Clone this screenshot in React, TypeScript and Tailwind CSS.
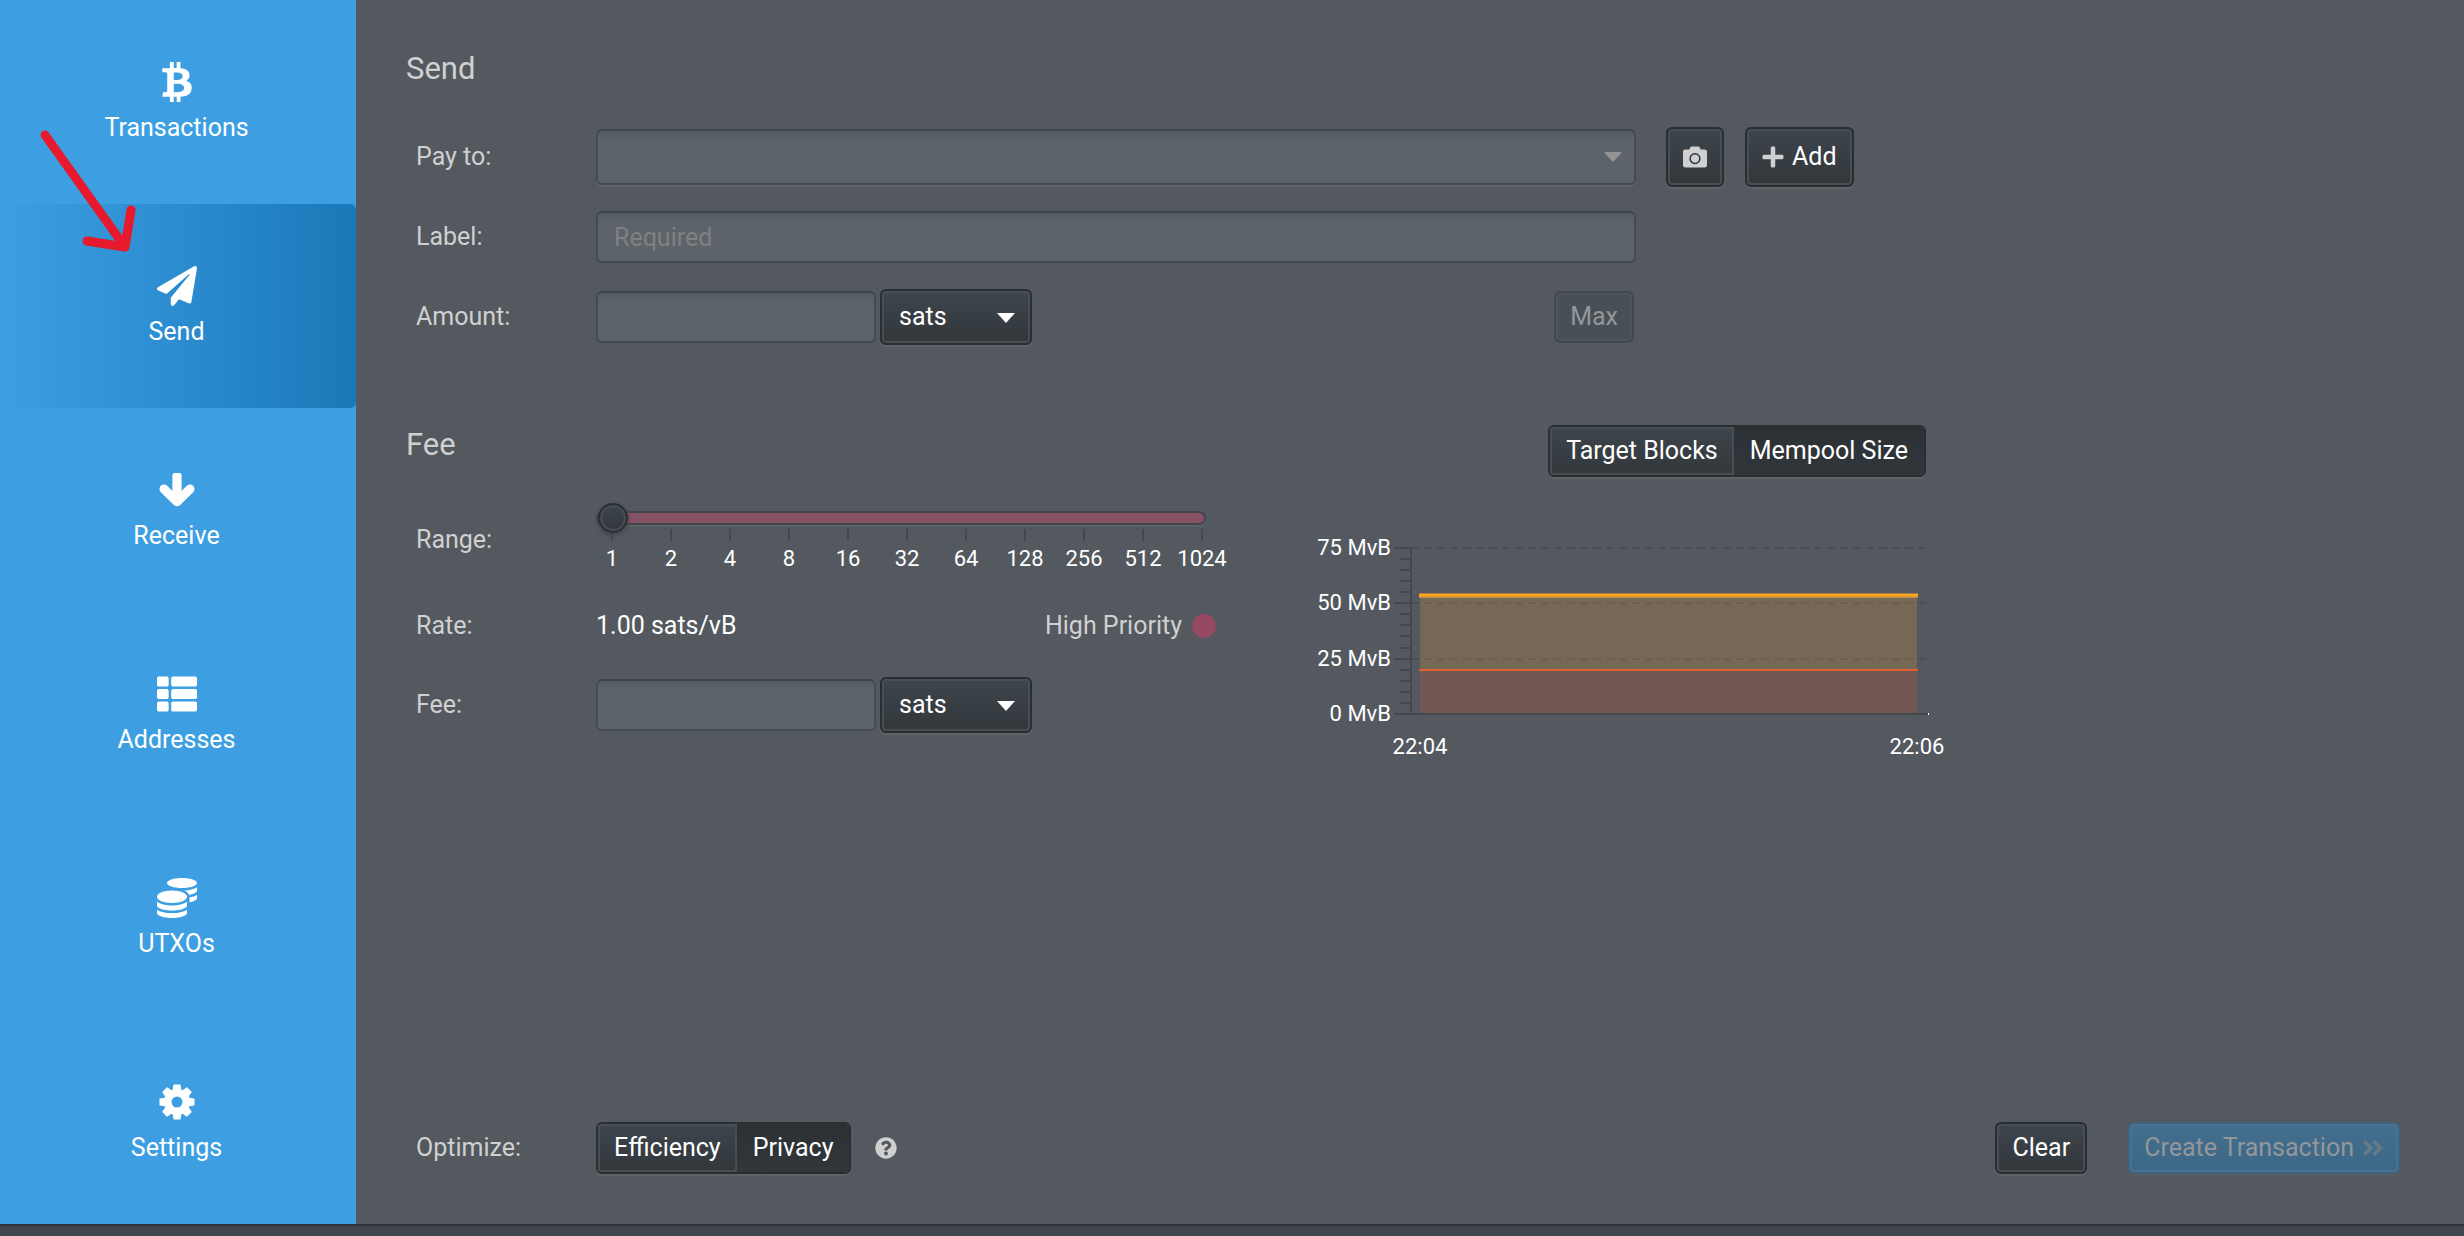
import { useState } from 'react';
import type { ReactNode } from 'react';
import {
  FaAngleDoubleRight,
  FaBtc,
  FaCamera,
  FaCoins,
  FaPaperPlane,
  FaPlus,
  FaQuestionCircle,
  FaThList,
} from 'react-icons/fa';

const RATES = [1, 2, 4, 8, 16, 32, 64, 128, 256, 512, 1024];

const FIELD =
  'w-full rounded-md border-2 border-[#454b52] border-t-[#3e444b] bg-[#5c636a] bg-linear-to-b from-[#535a61] from-0% to-[#5c636a] to-20% px-4 text-white placeholder:text-[#82807f] focus:outline-none';

const BUTTON =
  'flex items-center justify-center rounded-md border-2 border-[#292e31] bg-linear-to-b from-[#3e454d] to-[#31373a] text-white shadow-[inset_0_0_0_2px_#484f54,0_2px_0_#5d6367]';

function CogIcon() {
  return (
    <svg viewBox="-18 -18 36 36" className="h-9 w-9" fill="currentColor">
      <path
        fillRule="evenodd"
        d="M0-13A13 13 0 1 1 0 13A13 13 0 1 1 0-13ZM0-5.5A5.5 5.500 0 1 0 0 5.500A5.500 5.500 0 1 0 0-5.500Z"
      />
      {[0, 45, 90, 135, 180, 225, 270, 315].map((a) => (
        <path key={a} transform={`rotate(${a})`} d="M-4.6-11L-3.6-17Q-3.5-17.5-3-17.5H3Q3.5-17.5 3.6-17L4.6-11Z" />
      ))}
    </svg>
  );
}

function ArrowDownIcon() {
  return (
    <svg viewBox="0 0 36 34" className="h-[34px] w-9" fill="currentColor">
      <rect x="13.400" y="0" width="9.200" height="30" rx="2.500" />
      <path d="M5 16L18 28.800L31 16" fill="none" stroke="currentColor" strokeWidth="9" strokeLinecap="round" strokeLinejoin="round" />
    </svg>
  );
}

const NAV: { label: string; icon: ReactNode }[] = [
  { label: 'Transactions', icon: <FaBtc /> },
  { label: 'Send', icon: <FaPaperPlane /> },
  { label: 'Receive', icon: <ArrowDownIcon /> },
  { label: 'Addresses', icon: <FaThList /> },
  { label: 'UTXOs', icon: <FaCoins /> },
  { label: 'Settings', icon: <CogIcon /> },
];

function Sidebar() {
  const [active, setActive] = useState('Send');

  return (
    <nav className="flex w-[356px] shrink-0 flex-col bg-[#3d9fe2]">
      {NAV.map(({ label, icon }) => (
        <button
          key={label}
          onClick={() => setActive(label)}
          className={`flex flex-1 flex-col items-center justify-center gap-[10px] rounded-r-md pt-[2px] pr-[3px] text-white ${
            label === active ? 'bg-linear-to-r from-[#3d9fe2] via-[#2b8cd0] to-[#1b78b8]' : ''
          }`}
        >
          <span className="flex h-10 items-center text-[40px]">{icon}</span>
          <span className="leading-8">{label}</span>
        </button>
      ))}
    </nav>
  );
}

function UnitSelect({ label }: { label: string }) {
  return (
    <div className="relative w-[152px]">
      <select
        aria-label={label}
        className="h-14 w-full appearance-none rounded-md border-2 border-[#292e31] bg-linear-to-b from-[#3e454d] to-[#31373a] px-[17px] text-white shadow-[inset_0_0_0_2px_#484f54,0_2px_0_#5d6367]"
      >
        <option>sats</option>
        <option>BTC</option>
      </select>
      <svg viewBox="0 0 18 10" className="pointer-events-none absolute top-6 right-[17px] h-[10px] w-[18px]">
        <path d="M0 0H18L9 10Z" fill="#fff" />
      </svg>
    </div>
  );
}

interface SegmentedProps {
  options: string[];
  initial: string;
}

function Segmented({ options, initial }: SegmentedProps) {
  const [value, setValue] = useState(initial);

  return (
    <div className="flex h-[52px] rounded-md border-2 border-[#292e31] shadow-[0_2px_0_#5d6367]">
      {options.map((o) => (
        <button
          key={o}
          aria-pressed={o === value}
          onClick={() => setValue(o)}
          className={`px-4 text-white first:rounded-l-sm last:rounded-r-sm ${
            o === value
              ? 'bg-linear-to-b from-[#2c3135] to-[#303639]'
              : 'bg-linear-to-b from-[#3e454d] to-[#31373a] shadow-[inset_0_0_0_2px_#484f54]'
          }`}
        >
          {o}
        </button>
      ))}
    </div>
  );
}

function RateSlider() {
  const [step, setStep] = useState(0);

  return (
    <div className="w-[610px]">
      <input
        id="range"
        type="range"
        min={0}
        max={RATES.length - 1}
        value={step}
        onChange={(e) => setStep(Number(e.target.value))}
        className="relative block h-[22px] w-full appearance-none bg-transparent [&::-webkit-slider-runnable-track]:h-[14px] [&::-webkit-slider-runnable-track]:rounded-full [&::-webkit-slider-runnable-track]:border-2 [&::-webkit-slider-runnable-track]:border-[#42464d] [&::-webkit-slider-runnable-track]:bg-[#865264] [&::-webkit-slider-runnable-track]:shadow-[0_2px_0_#5d6367] [&::-webkit-slider-thumb]:-mt-[10px] [&::-webkit-slider-thumb]:h-[30px] [&::-webkit-slider-thumb]:w-[30px] [&::-webkit-slider-thumb]:appearance-none [&::-webkit-slider-thumb]:rounded-full [&::-webkit-slider-thumb]:border-2 [&::-webkit-slider-thumb]:border-[#292e31] [&::-webkit-slider-thumb]:bg-linear-to-b [&::-webkit-slider-thumb]:from-[#3e454d] [&::-webkit-slider-thumb]:to-[#31373a] [&::-webkit-slider-thumb]:shadow-[inset_0_0_0_2px_#484f54,0_2px_4px_#3c4247]"
      />
      <div className="flex justify-between pr-1 pl-4 text-[22px] leading-7 text-white">
        {RATES.map((r) => (
          <div key={r} className="flex w-0 flex-col items-center">
            <span className="mb-1 h-3 w-[2px] shrink-0 bg-[#42484e]" />
            {r}
          </div>
        ))}
      </div>
    </div>
  );
}

const MINOR_TICKS = [11, 22, 33, 44, 66, 77, 88, 100, 122, 133, 144, 155];
const MAJOR_TICKS = [
  { y: 0, label: '75 MvB' },
  { y: 55, label: '50 MvB' },
  { y: 111, label: '25 MvB' },
  { y: 166, label: '0 MvB' },
];

function MempoolChart() {
  return (
    <svg viewBox="0 0 640 240" className="h-[240px] w-[640px] text-[22px]" fill="#fff" role="img" aria-label="Mempool Size">
      <g transform="translate(0 18)">
        <g stroke="#484f55" strokeWidth="2" strokeDasharray="8 5">
          <path d="M101 0H619M101 55H619M101 111H619" />
        </g>
        <rect x="110" y="49" width="497" height="73" fill="#ffa726" fillOpacity="0.2" />
        <rect x="110" y="122" width="497" height="44" fill="#f4511e" fillOpacity="0.2" />
        <path d="M109 49H608" stroke="#b98e4c" strokeWidth="2" />
        <path d="M109 47H608" stroke="#faa41f" strokeWidth="3" />
        <path d="M109 122H608" stroke="#e0632f" strokeWidth="2" />
        <g stroke="#42484e" strokeWidth="2">
          <path d="M101 -1V166M84 166H618" />
          {MINOR_TICKS.map((y) => (
            <path key={y} d={`M90 ${y}H101`} />
          ))}
          {MAJOR_TICKS.map(({ y }) => (
            <path key={y} d={`M84 ${y}H101`} />
          ))}
        </g>
        <rect x="618" y="165" width="1" height="2" />
        {MAJOR_TICKS.map(({ y, label }) => (
          <text key={label} x="81" y={y + 7} textAnchor="end">
            {label}
          </text>
        ))}
        <text x="110" y="206" textAnchor="middle">
          22:04
        </text>
        <text x="607" y="206" textAnchor="middle">
          22:06
        </text>
      </g>
    </svg>
  );
}

function Row({ label, htmlFor, children }: { label: string; htmlFor?: string; children: ReactNode }) {
  return (
    <div className="flex items-center pl-[10px]">
      <label htmlFor={htmlFor} className="w-[180px] shrink-0">
        {label}
      </label>
      {children}
    </div>
  );
}

export default function App() {
  return (
    <div className="relative flex min-h-screen flex-col bg-[#53595f] font-[Roboto,'Liberation_Sans',sans-serif] text-[25px] leading-8 text-[#d0d0d0]">
      <div className="flex flex-1">
        <Sidebar />

        <main className="flex flex-1 flex-col pt-[49px] pr-16 pb-[50px] pl-[50px]">
          <h2 className="text-[31px] leading-10">Send</h2>
          <div className="mt-[38px] flex flex-col">
            <Row label="Pay to:" htmlFor="payto">
              <div className="flex h-[60px] flex-1 items-center">
                <div className="relative w-full max-w-[1040px]">
                  <input id="payto" className={`${FIELD} h-14 shadow-[0_2px_0_#5d6367]`} />
                  <button aria-label="Recent payees" className="absolute top-0 right-[14px] flex h-14 items-center">
                    <svg viewBox="0 0 18 10" className="h-[10px] w-[18px]">
                      <path d="M1 0H17Q18 .5 17 1.500L10 9Q9 10 8 9L1 1.500Q0 .5 1 0Z" fill="#949494" />
                    </svg>
                  </button>
                </div>
                <button aria-label="Scan QR" className={`${BUTTON} ml-[30px] h-[60px] w-[58px] shrink-0`}>
                  <FaCamera className="h-6 w-6 text-[#d0d0d0]" />
                </button>
                <button className={`${BUTTON} ml-[21px] h-[60px] shrink-0 gap-2 px-[15px]`}>
                  <FaPlus className="h-6 w-[22px] text-[#d0d0d0]" />
                  Add
                </button>
              </div>
            </Row>
            <div className="flex h-[100px] flex-col justify-center">
              <Row label="Label:" htmlFor="label">
                <div className="w-full max-w-[1040px]">
                  <input id="label" placeholder="Required" className={`${FIELD} h-[52px]`} />
                </div>
              </Row>
            </div>
            <Row label="Amount:" htmlFor="amount">
              <div className="flex h-[60px] w-full max-w-[1040px] items-center gap-1">
                <div className="w-[280px]">
                  <input id="amount" className={`${FIELD} h-[52px]`} />
                </div>
                <UnitSelect label="Amount unit" />
                <button
                  disabled
                  className="mr-[2px] ml-auto h-[52px] rounded-md border-2 border-[#42484e] bg-[#484f55] px-[14px] text-[#93979a] shadow-[inset_0_0_0_2px_#4e555b,0_2px_0_#575d63]"
                >
                  Max
                </button>
              </div>
            </Row>
          </div>

          <div className="mt-[78px] flex h-[54px] w-full max-w-[1520px] items-start justify-between">
            <h2 className="text-[31px] leading-10">Fee</h2>
            <Segmented options={['Target Blocks', 'Mempool Size']} initial="Mempool Size" />
          </div>
          <div className="flex items-start">
            <div className="mt-7 w-[820px] shrink-0">
              <Row label="Range:" htmlFor="range">
                <RateSlider />
              </Row>
              <div className="mt-[37px] pr-[10px]">
                <Row label="Rate:">
                  <output className="text-white">1.00 sats/vB</output>
                  <div className="ml-auto flex items-center gap-[10px]">
                    High Priority
                    <span className="h-6 w-6 rounded-full bg-[#954a61]" />
                  </div>
                </Row>
              </div>
              <div className="mt-[35px]">
                <Row label="Fee:" htmlFor="fee">
                  <div className="flex items-center gap-1">
                    <div className="w-[280px]">
                      <input id="fee" className={`${FIELD} h-[52px]`} />
                    </div>
                    <UnitSelect label="Fee unit" />
                  </div>
                </Row>
              </div>
            </div>
            <div className="mt-[51px] ml-[84px]">
              <MempoolChart />
            </div>
          </div>

          <div className="mt-auto flex items-center">
            <Row label="Optimize:">
              <Segmented options={['Efficiency', 'Privacy']} initial="Privacy" />
              <FaQuestionCircle className="ml-6 h-[22px] w-[22px]" />
            </Row>
            <div className="ml-auto flex gap-[41px]">
              <button className={`${BUTTON} h-[52px] px-[15px]`}>Clear</button>
              <button
                disabled
                className="flex h-[52px] items-center gap-2 rounded-md border-2 border-[#3d6482] bg-linear-to-b from-[#446e8e] to-[#3d6787] px-[14px] text-[#93979a] shadow-[inset_0_0_0_2px_#4a7291,0_2px_0_#575d63]"
              >
                Create Transaction
                <FaAngleDoubleRight className="h-[26px] w-[22px] text-[#647a8a]" />
              </button>
            </div>
          </div>
        </main>
      </div>

      <footer className="h-3 border-t-2 border-[#2e3337] bg-[#40454b]" />

      <svg
        viewBox="0 0 100 130"
        className="pointer-events-none absolute top-[126px] left-[38px] h-[130px] w-[100px]"
        fill="none"
        stroke="#e6192d"
        strokeWidth="9"
        strokeLinecap="round"
        strokeLinejoin="round"
      >
        <path d="M7 9L87 121M49 115L87 121L93 84" />
      </svg>
    </div>
  );
}
